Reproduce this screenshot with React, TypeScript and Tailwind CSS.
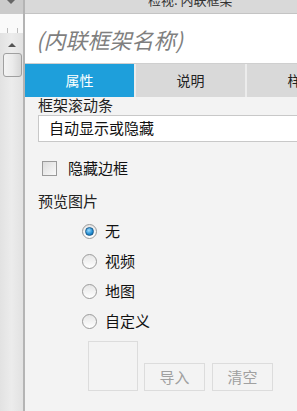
import { useState } from "react";

const font = { fontFamily: '"Noto Sans CJK SC", "Noto Sans", sans-serif' };

function Radio({ label, checked, onSelect }: { label: string; checked: boolean; onSelect: () => void }) {
  return (
    <button onClick={onSelect} className="flex h-[30px] items-center pl-[44px] text-left">
      <span className="flex h-[15px] w-[15px] items-center justify-center rounded-full border border-[#9a9a9a] bg-gradient-to-b from-[#e6e6e6] to-white">
        {checked && (
          <span className="h-[9px] w-[9px] rounded-full border border-[#1f5f8f] bg-[radial-gradient(circle_at_40%_35%,#9fdcff,#1d8ad0_60%,#0c5a99)]" />
        )}
      </span>
      <span className="ml-[8px] text-[15px] leading-[18px] text-[#111]">{label}</span>
    </button>
  );
}

export default function App() {
  const [preview, setPreview] = useState("无");
  const [hideBorder, setHideBorder] = useState(false);
  const [tab, setTab] = useState(0);
  const tabs = ["属性", "说明", "样式"];

  return (
    <div style={font} className="flex h-[411px] w-[297px] overflow-hidden bg-[#f3f3f3]">
      {/* left scroll strip */}
      <div className="flex w-[23px] shrink-0 flex-col bg-gradient-to-r from-[#e2e2e2] via-[#ececec] to-[#e2e2e2]">
        <div className="relative h-[14px] bg-[#cbcbcb]">
          <span className="absolute left-[7px] top-0 h-0 w-0 border-x-[4px] border-t-[4px] border-x-transparent border-t-[#666]" />
        </div>
        <div className="relative h-[19px] bg-[#fafafa]">
          <span className="absolute bottom-0 left-[7px] h-[5px] w-px bg-[#bbb]" />
          <span className="absolute bottom-0 left-[17px] h-[5px] w-px bg-[#bbb]" />
        </div>
        <div className="flex h-[20px] items-center justify-center pt-[3px]">
          <span className="h-0 w-0 border-x-[4px] border-b-[4px] border-x-transparent border-b-[#555]" />
        </div>
        <div className="ml-[3px] h-[24px] w-[19px] rounded-[3px] border border-[#a0a0a0] bg-gradient-to-r from-[#f4f4f4] via-[#ebebeb] to-[#d6d6d6]" />
      </div>
      <div className="w-[2px] shrink-0 bg-[#b4b4b4]" />

      {/* main panel */}
      <div className="flex min-w-0 flex-1 flex-col">
        <div className="h-[14px] shrink-0 overflow-hidden border-b border-[#c4c4c4] bg-[#d9d9d9]">
          <div className="mt-[-7px] whitespace-nowrap pl-[123px] text-[13px] leading-[13px] text-[#333]">检视: 内联框架</div>
        </div>
        <div className="flex h-[49px] shrink-0 items-center bg-white pl-[11px]">
          <span className="text-[22px] italic leading-[24px] text-[#7f7f7f]">(内联框架名称)</span>
        </div>
        <div className="flex h-[34px] shrink-0 border-t border-[#cfcfcf]">
          {tabs.map((t, i) => (
            <button
              key={t}
              onClick={() => setTab(i)}
              className={`flex w-[111px] shrink-0 items-center justify-center border-r-2 border-[#ececec] text-[14px] ${
                tab === i ? "bg-[#1e9fdb] text-white" : "bg-[#d9d9d9] text-[#222]"
              }`}
            >
              {t}
            </button>
          ))}
        </div>

        <div className="flex flex-col pl-[13px]">
          <div className="mt-[-1px] text-[15px] leading-[18px] text-[#222]">框架滚动条</div>
          <div className="mt-[1px] flex h-[27px] w-[270px] shrink-0 items-center border border-[#c8c8c8] bg-white pl-[10px] text-[15px] text-[#111]">
            自动显示或隐藏
          </div>

          <button onClick={() => setHideBorder(!hideBorder)} className="mt-[17px] flex h-[18px] items-center pl-[4px] text-left">
            <span className="flex h-[15px] w-[15px] items-center justify-center border border-[#9a9a9a] bg-gradient-to-br from-[#dcdcdc] to-[#fafafa] text-[11px] leading-none text-[#333]">
              {hideBorder ? "✓" : ""}
            </span>
            <span className="ml-[11px] text-[15px] leading-[18px] text-[#111]">隐藏边框</span>
          </button>

          <div className="mt-[15px] text-[15px] leading-[18px] text-[#222]">预览图片</div>

          <div className="mt-[6px] flex flex-col">
            {["无", "视频", "地图", "自定义"].map((r) => (
              <Radio key={r} label={r} checked={preview === r} onSelect={() => setPreview(r)} />
            ))}
          </div>

          <div className="mt-[5px] flex items-end pl-[50px]">
            <div className="h-[50px] w-[50px] border border-[#dcdcdc] bg-[#f3f3f3]" />
            <button className="ml-[6px] h-[28px] w-[61px] border border-[#dcdcdc] text-[15px] text-[#a0a0a0]">导入</button>
            <button className="ml-[7px] h-[28px] w-[61px] border border-[#dcdcdc] text-[15px] text-[#a0a0a0]">清空</button>
          </div>
        </div>
      </div>
    </div>
  );
}
